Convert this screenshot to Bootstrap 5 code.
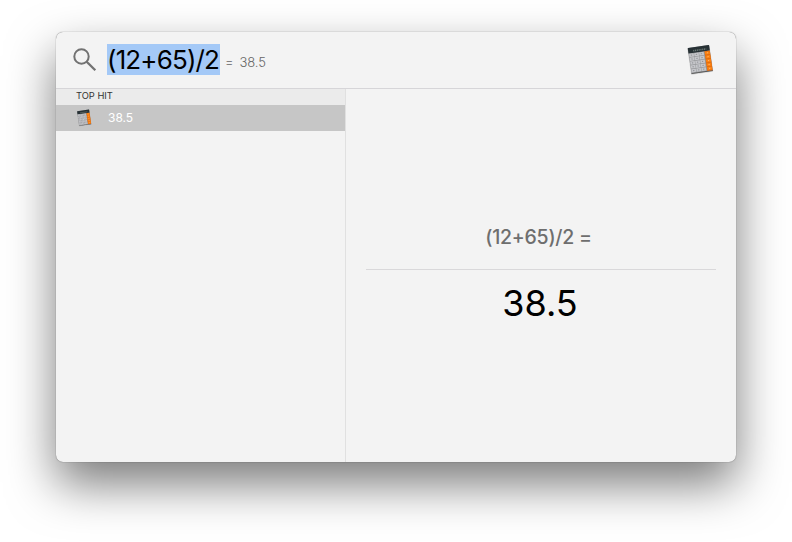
<!DOCTYPE html>
<html lang="en">
<head>
<meta charset="utf-8">
<title>Search</title>
<link href="https://cdn.jsdelivr.net/npm/bootstrap@5.3.0/dist/css/bootstrap.min.css" rel="stylesheet">
<style>
body{background:#fff;font-family:Inter,"Liberation Sans",sans-serif;color:#000;height:542px;padding:32px 56px 80px}
.panel{width:680px;height:430px;background:#f3f3f3;border-radius:7px;box-shadow:0 0 1px rgba(0,0,0,.65),0 22px 48px rgba(0,0,0,.52)}
.searchbar{height:57px;border-bottom:1px solid #d6d5d8;padding:0 20px 0 17px}
.query{background:#a4c9f7;height:31px;line-height:31px;width:113px;font-size:26px;letter-spacing:-.85px;margin:0 0 2px 10px}
.answer{font-size:13px;color:#666;font-weight:300;white-space:pre;word-spacing:-.5px;letter-spacing:-.1px;margin:6px 0 0 5px}
.results{width:290px;border-right:1px solid #e0e0e0}
.heading{height:16px;line-height:14px;background:#ebebeb;font-size:9.3px;padding-left:20px;color:#333}
.hit{height:26px;background:#c6c6c6;color:#fff;font-size:12px;padding-left:19px}
.hit span{margin-left:15px}
.expr{font-size:19.5px;line-height:24px;font-weight:500;letter-spacing:-.25px;color:#6e6e6e;margin-top:136px;padding-right:5px}
.rule{height:1px;background:#d9d8da;margin:20px 20px 0}
.total{font-size:36px;line-height:44px;margin-top:11px;padding-right:2px}
</style>
<script src="https://cdn.jsdelivr.net/npm/bootstrap@5.3.0/dist/js/bootstrap.bundle.min.js"></script>
</head>
<body>
<svg width="0" height="0" class="position-absolute" aria-hidden="true">
  <symbol id="calc" viewBox="0 0 32 32">
    <g transform="matrix(1 -.143 .145 .99 3.7 4)">
      <rect x="-.5" y=".6" width="22.2" height="26.4" rx=".8" fill="#000" opacity=".13"/>
      <rect width="21.3" height="26" rx=".5" fill="#97989b"/>
      <rect y="25.4" width="21.3" height=".8" fill="#555"/>
      <rect width="21.3" height="5.6" rx=".4" fill="#273135"/>
      <path d="M5 3.5h13" stroke="#6d7a77" stroke-width="1.6" stroke-dasharray="1.1 .7"/>
      <path d="M.5 7.6h15M.5 11.5h15M.5 15.4h15M.5 19.3h15M.5 23.2h15" stroke="#c5c6ca" stroke-width="3.2" stroke-dasharray="4.5 .5"/>
      <path d="M2 7.6h13M2 11.5h13M2 15.4h13M2 19.3h13M2 23.2h13" stroke="#909196" stroke-width="1" stroke-dasharray="1.3 3.7"/>
      <path d="M15.9 5.6h5.4v20h-5.4z" fill="#d86712"/>
      <path d="M16.2 7.6h4.8M16.2 11.5h4.8M16.2 15.4h4.8M16.2 19.3h4.8M16.2 23.2h4.8" stroke="#fb8010" stroke-width="3.1"/>
      <path d="M18 7.6h1.3M18 11.5h1.3M18 15.4h1.3M18 19.3h1.3M18 23.2h1.3" stroke="#ffc080" stroke-width=".8"/>
    </g>
  </symbol>
</svg>
<main class="panel d-flex flex-column overflow-hidden">
  <header class="searchbar d-flex align-items-center flex-shrink-0">
    <svg width="24" height="24" viewBox="0 0 24 24" fill="none" stroke="#727272" stroke-width="2"><circle cx="8.5" cy="8.5" r="7.2"/><path d="M13.7 13.7 22.3 22.3" stroke-width="2.3"/></svg>
    <div class="query text-nowrap">(12+65)/2</div>
    <div class="answer">=  38.5</div>
    <svg class="ms-auto" width="32" height="32"><use href="#calc"/></svg>
  </header>
  <div class="d-flex flex-grow-1">
    <section class="results flex-shrink-0">
      <div class="heading">TOP HIT</div>
      <div class="hit d-flex align-items-center"><svg width="18" height="18"><use href="#calc"/></svg><span class="text-nowrap">38.5</span></div>
    </section>
    <section class="flex-grow-1 text-center">
      <div class="expr">(12+65)/2 =</div>
      <div class="rule"></div>
      <div class="total">38.5</div>
    </section>
  </div>
</main>
</body>
</html>
